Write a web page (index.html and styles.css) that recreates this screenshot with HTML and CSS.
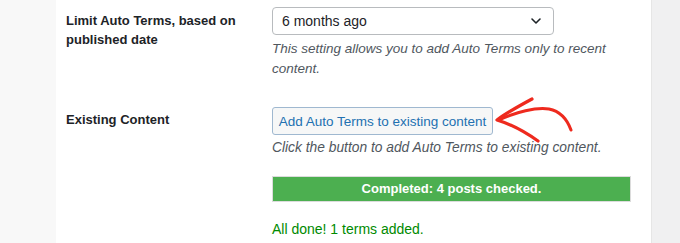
FILE: index.html
```html
<!DOCTYPE html>
<html>
<head>
<meta charset="utf-8">
<link rel="stylesheet" href="styles.css">
</head>
<body>
<div class="page">
  <div class="side-left"></div>
  <div class="panel">
    <div class="row row-limit">
      <div class="label">Limit Auto Terms, based on<br>published date</div>
      <div class="field">
        <div class="select">
          <span>6 months ago</span>
          <svg class="chevron" width="14" height="14" viewBox="0 0 14 14"><path d="M3 5 L7 9 L11 5" fill="none" stroke="#1d2327" stroke-width="1.6" stroke-linecap="round" stroke-linejoin="round"/></svg>
        </div>
        <p class="desc">This setting allows you to add Auto Terms only to recent<br>content.</p>
      </div>
    </div>
    <div class="row row-existing">
      <div class="label">Existing Content</div>
      <div class="field">
        <div class="btn-wrap">
          <button class="button">Add Auto Terms to existing content</button>
          <svg class="arrow" width="90" height="60" viewBox="0 0 90 60">
            <path d="M8 32 C 25 24, 45 19, 58 21 C 68 23, 76 31, 80 42" fill="none" stroke="#ee2a1e" stroke-width="3" stroke-linecap="round"/>
            <path d="M41 11 C 28 18, 15 25, 6 32 C 16 35, 30 41, 47 53" fill="none" stroke="#ee2a1e" stroke-width="3.2" stroke-linecap="round" stroke-linejoin="round"/>
          </svg>
        </div>
        <p class="desc desc-click">Click the button to add Auto Terms to existing content.</p>
        <div class="progress"><span>Completed: 4 posts checked.</span></div>
        <p class="done">All done! 1 terms added.</p>
      </div>
    </div>
  </div>
  <div class="side-right"></div>
</div>
</body>
</html>
```

FILE: styles.css
```css
html, body {
  margin: 0;
  padding: 0;
}
body {
  width: 680px;
  height: 243px;
  overflow: hidden;
  font-family: "Liberation Sans", Arial, sans-serif;
  color: #1d2327;
  background: #fff;
}
.page {
  display: flex;
  height: 243px;
}
.side-left {
  width: 56px;
  background: #f8f8f8;
  flex: none;
}
.side-right {
  width: 28px;
  background: #f0f0f1;
  border-left: 1px solid #e6e6e6;
  flex: none;
}
.panel {
  flex: 1;
  background: #fff;
  padding-left: 10px;
}
.row {
  display: grid;
  grid-template-columns: 206px 1fr;
}
.label {
  font-size: 13px;
  font-weight: 700;
  line-height: 19px;
  color: #1d2327;
}
.row-limit {
  padding-top: 7px;
}
.row-limit .label {
  padding-top: 4px;
}
.select {
  box-sizing: border-box;
  width: 282px;
  height: 28px;
  border: 1px solid #b8bbbe;
  border-radius: 4px;
  display: flex;
  align-items: center;
  justify-content: space-between;
  padding: 0 10px 0 9px;
  font-size: 14px;
}
.chevron {
  display: block;
}
.desc {
  margin: 4px 0 0;
  font-size: 13.5px;
  font-style: italic;
  line-height: 20px;
  color: #50575e;
}
.row-existing {
  margin-top: 28px;
}
.row-existing .label {
  padding-top: 3px;
}
.btn-wrap {
  position: relative;
  height: 28px;
}
.button {
  box-sizing: border-box;
  height: 28px;
  width: 221px;
  padding: 0;
  white-space: nowrap;
  text-align: center;
  font-family: inherit;
  font-size: 13.5px;
  color: #2271b1;
  background: #f6f7f7;
  border: 1px solid #9fb8d0;
  border-radius: 3px;
  cursor: pointer;
}
.arrow {
  position: absolute;
  left: 219px;
  top: -19px;
}
.desc-click {
  margin-top: 3px;
  font-size: 13.8px;
}
.progress {
  box-sizing: border-box;
  margin-top: 18px;
  width: 359px;
  height: 26px;
  background: #4caf50;
  border: 1px solid #dcdcdc;
  display: flex;
  justify-content: center;
  align-items: center;
  padding-bottom: 2px;
}
.progress span {
  color: #fff;
  font-size: 13px;
  font-weight: 700;
}
.done {
  margin: 17px 0 0;
  font-size: 14px;
  line-height: 20px;
  color: #008a00;
}
```
